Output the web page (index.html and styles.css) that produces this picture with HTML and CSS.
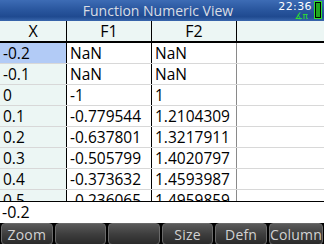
FILE: index.html
```html
<!DOCTYPE html>
<html>
<head>
<meta charset="utf-8">
<link rel="stylesheet" href="styles.css">
</head>
<body>
<div class="screen">
  <div class="titlebar">
    <span class="title">Function Numeric View</span>
    <div class="status">
      <div class="status-text">
        <span class="time">22:36</span>
        <span class="mode">∡π</span>
      </div>
      <div class="battery"><div class="battery-fill"></div></div>
    </div>
  </div>
  <div class="table">
    <div class="row head">
      <div class="cell xcol">X</div>
      <div class="cell">F1</div>
      <div class="cell">F2</div>
      <div class="cell last"></div>
    </div>
    <div class="body">
      <div class="row"><div class="cell xcol sel">-0.2</div><div class="cell">NaN</div><div class="cell">NaN</div><div class="cell last"></div></div>
      <div class="row"><div class="cell xcol">-0.1</div><div class="cell">NaN</div><div class="cell">NaN</div><div class="cell last"></div></div>
      <div class="row"><div class="cell xcol">0</div><div class="cell">-1</div><div class="cell">1</div><div class="cell last"></div></div>
      <div class="row"><div class="cell xcol">0.1</div><div class="cell">-0.779544</div><div class="cell">1.2104309</div><div class="cell last"></div></div>
      <div class="row"><div class="cell xcol">0.2</div><div class="cell">-0.637801</div><div class="cell">1.3217911</div><div class="cell last"></div></div>
      <div class="row"><div class="cell xcol">0.3</div><div class="cell">-0.505799</div><div class="cell">1.4020797</div><div class="cell last"></div></div>
      <div class="row"><div class="cell xcol">0.4</div><div class="cell">-0.373632</div><div class="cell">1.4593987</div><div class="cell last"></div></div>
      <div class="row"><div class="cell xcol">0.5</div><div class="cell">-0.236065</div><div class="cell">1.4959859</div><div class="cell last"></div></div>
    </div>
  </div>
  <div class="editline">-0.2</div>
  <div class="menu">
    <div class="btn">Zoom</div>
    <div class="btn"></div>
    <div class="btn"></div>
    <div class="btn">Size</div>
    <div class="btn">Defn</div>
    <div class="btn">Column</div>
  </div>
</div>
</body>
</html>
```
FILE: styles.css
```css
html, body {
  margin: 0;
  padding: 0;
  background: #000;
}
.screen {
  width: 324px;
  height: 244px;
  overflow: hidden;
  display: flex;
  flex-direction: column;
  font-family: "Open Sans", "Noto Sans", sans-serif;
  background: #fff;
}
.titlebar {
  height: 21px;
  flex: none;
  position: relative;
  background: linear-gradient(#3d6cb5 0%, #2a579f 45%, #1f4a90 80%, #3a67ad 100%);
  display: flex;
  align-items: center;
  justify-content: center;
  padding-right: 8px;
}
.title {
  color: #d9dde4;
  font-size: 14px;
  line-height: 21px;
}
.status {
  position: absolute;
  right: 2px;
  top: 1px;
  display: flex;
  gap: 2px;
}
.status-text {
  display: flex;
  flex-direction: column;
  align-items: flex-end;
  padding-top: 1px;
}
.time {
  color: #fff;
  font-family: "DejaVu Sans", sans-serif;
  font-size: 11px;
  line-height: 10px;
  letter-spacing: 0.4px;
}
.mode {
  color: #2ee02e;
  font-family: "DejaVu Sans", sans-serif;
  font-size: 9px;
  line-height: 9px;
  margin-right: 4px;
}
.battery {
  width: 4px;
  height: 14px;
  border: 1px solid #2ee02e;
  padding: 1px;
  background: #000;
}
.battery-fill {
  width: 100%;
  height: 100%;
  background: #1fa81f;
}
.table {
  flex: none;
  height: 180px;
  display: flex;
  flex-direction: column;
  border-bottom: 1px solid #000;
  overflow: hidden;
}
.row {
  display: flex;
  height: 20px;
  border-bottom: 1px solid #d8d8d8;
  flex: none;
}
.row.head {
  background: #ecf6f4;
  border-bottom: 2px solid #000;
}
.head .cell {
  justify-content: center;
  padding-left: 0;
  border-right-color: #000;
  font-size: 16px;
}
.head .cell.last {
  border-right: none;
}
.cell {
  flex: none;
  display: flex;
  align-items: center;
  padding-left: 3px;
  box-sizing: border-box;
  border-right: 1px solid #000;
  font-size: 15.5px;
  color: #000;
  height: 20px;
  width: 85px;
  white-space: nowrap;
}
.cell.xcol {
  width: 67px;
  background: #ecf6f4;
}
.cell.sel {
  background: #b2cbf6;
}
.cell.last {
  flex: 1;
  border-right: none;
}
.body .cell:nth-child(3) {
  border-right-color: #8a8a8a;
}
.editline {
  flex: none;
  height: 21px;
  line-height: 21px;
  font-size: 16px;
  padding-left: 2px;
  background: #fff;
  color: #000;
}
.menu {
  flex: none;
  height: 22px;
  background: #000;
  display: flex;
  gap: 2px;
  padding: 0 1px;
}
.btn {
  flex: 1;
  border-radius: 4px;
  border: 1px solid #6a6a6a;
  background: linear-gradient(#5a5a5a 0%, #3e3e3e 50%, #2a2a2a 100%);
  color: #d2d2d2;
  font-size: 14px;
  display: flex;
  align-items: center;
  justify-content: center;
  letter-spacing: 0.2px;
}
```
